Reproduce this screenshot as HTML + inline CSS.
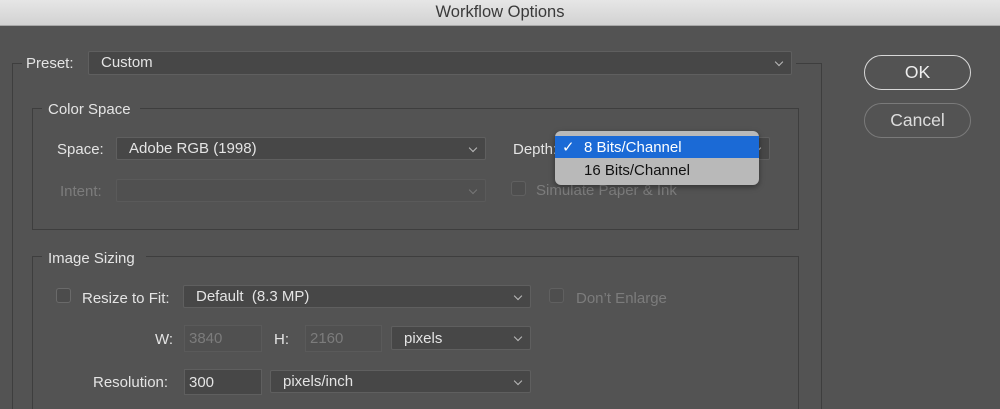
<!DOCTYPE html>
<html><head><style>
*{box-sizing:border-box;margin:0;padding:0}
body{width:1000px;height:409px;overflow:hidden;background:#535353;font-family:"Liberation Sans",sans-serif;font-size:15px;color:#e4e4e4;position:relative}
.a{position:absolute;white-space:nowrap}
.title{left:0;top:0;width:1000px;height:26px;background:linear-gradient(#e6e6e6,#d2d2d2);border-bottom:1px solid #a8a8a8;color:#3a3a3a;font-size:16.5px;text-align:center;line-height:25px}
.dd{position:absolute;background:#474747;border:1px solid #5f5f5f;border-radius:2px;padding-left:12px;line-height:22px}
.dd::after{content:"";position:absolute;right:9px;top:7px;width:5px;height:5px;border-right:1.3px solid #bbb;border-bottom:1.3px solid #bbb;transform:rotate(45deg)}
.dis{background:#505050;border-color:#5a5a5a}
.dis::after{border-color:#777}
.line{position:absolute;background:#3e3e3e}
.cb{position:absolute;width:15px;height:15px;border:1px solid #6a6a6a;border-radius:3px;background:#4c4c4c}
.dim{color:#7c7c7c}
.fld{position:absolute;background:#474747;border:1px solid #5f5f5f;padding-left:4px;line-height:25px}
.btn{position:absolute;border-radius:18px;text-align:center;font-size:17.5px;line-height:33px}
</style></head><body>
<div class="a title">Workflow Options</div>

<div class="line" style="left:12px;top:63px;width:10px;height:1px"></div>
<div class="line" style="left:12px;top:63px;width:1px;height:346px"></div>
<div class="line" style="left:796px;top:63px;width:26px;height:1px"></div>
<div class="line" style="left:821px;top:63px;width:1px;height:346px"></div>
<div class="a" style="left:26px;top:55px">Preset:</div>
<div class="dd" style="left:88px;top:51px;width:704px;height:24px">Custom</div>

<div class="line" style="left:32px;top:108px;width:10px;height:1px"></div>
<div class="line" style="left:140px;top:108px;width:658px;height:1px"></div>
<div class="line" style="left:32px;top:108px;width:1px;height:122px"></div>
<div class="line" style="left:798px;top:108px;width:1px;height:122px"></div>
<div class="line" style="left:32px;top:229px;width:767px;height:1px"></div>
<div class="a" style="left:48px;top:101px">Color Space</div>
<div class="a" style="left:57px;top:141px">Space:</div>
<div class="dd" style="left:116px;top:137px;width:370px;height:23px">Adobe RGB (1998)</div>
<div class="a dim" style="left:60px;top:183px">Intent:</div>
<div class="dd dis" style="left:116px;top:179px;width:370px;height:23px"></div>
<div class="a" style="left:513px;top:141px">Depth:</div>
<div class="dd" style="left:555px;top:137px;width:215px;height:23px"></div>
<div class="cb" style="left:511px;top:181px;opacity:.6"></div>
<div class="a dim" style="left:536px;top:182px">Simulate Paper &amp; Ink</div>
<div class="a" style="left:555px;top:131px;width:204px;height:54px;background:#b9b9b9;border-radius:6px;box-shadow:0 2px 6px rgba(0,0,0,.4);overflow:hidden">
 <div style="position:absolute;left:0;top:5px;width:204px;height:22px;background:#1b6ad6;color:#fff;line-height:23px"><span style="position:absolute;left:7px">✓</span><span style="position:absolute;left:29px">8 Bits/Channel</span></div>
 <div style="position:absolute;left:29px;top:28px;color:#111;line-height:23px">16 Bits/Channel</div>
</div>

<div class="btn" style="left:864px;top:55px;width:107px;height:35px;border:1.5px solid #d8d8d8;color:#eee">OK</div>
<div class="btn" style="left:864px;top:103px;width:107px;height:35px;border:1px solid #7a7a7a;color:#ddd">Cancel</div>

<div class="line" style="left:32px;top:256px;width:10px;height:1px"></div>
<div class="line" style="left:146px;top:256px;width:652px;height:1px"></div>
<div class="line" style="left:32px;top:256px;width:1px;height:153px"></div>
<div class="line" style="left:798px;top:256px;width:1px;height:153px"></div>
<div class="a" style="left:48px;top:250px">Image Sizing</div>
<div class="cb" style="left:56px;top:288px"></div>
<div class="a" style="left:82px;top:290px">Resize to Fit:</div>
<div class="dd" style="left:183px;top:285px;width:348px;height:23px">Default&nbsp; (8.3 MP)</div>
<div class="cb" style="left:549px;top:288px;opacity:.6"></div>
<div class="a dim" style="left:576px;top:290px">Don’t Enlarge</div>
<div class="a" style="left:155px;top:331px">W:</div>
<div class="fld dim" style="left:184px;top:325px;width:78px;height:27px;background:#505050;border-color:#5a5a5a">3840</div>
<div class="a" style="left:274px;top:331px">H:</div>
<div class="fld dim" style="left:305px;top:325px;width:77px;height:27px;background:#505050;border-color:#5a5a5a">2160</div>
<div class="dd" style="left:391px;top:326px;width:140px;height:24px;line-height:24px">pixels</div>
<div class="a" style="left:93px;top:374px">Resolution:</div>
<div class="fld" style="left:184px;top:369px;width:78px;height:26px">300</div>
<div class="dd" style="left:270px;top:370px;width:261px;height:23px">pixels/inch</div>
</body></html>
